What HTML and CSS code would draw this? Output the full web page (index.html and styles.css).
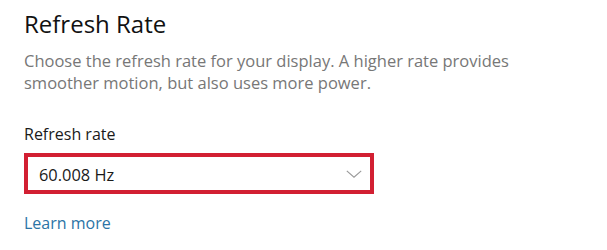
FILE: index.html
```html
<!DOCTYPE html>
<html>
<head>
<meta charset="utf-8">
<link rel="stylesheet" href="styles.css">
</head>
<body>
<div class="page">
  <h1 class="title">Refresh Rate</h1>
  <p class="desc">Choose the refresh rate for your display. A higher rate provides smoother motion, but also uses more power.</p>
  <div class="label">Refresh rate</div>
  <div class="select">
    <span class="value">60.008 Hz</span>
    <svg class="chev" width="16" height="8" viewBox="0 0 16 8"><path d="M0.8 0.8 L8 7.2 L15.2 0.8" fill="none" stroke="#999" stroke-width="1.1"/></svg>
  </div>
  <a class="link" href="#">Learn more</a>
</div>
</body>
</html>
```
FILE: styles.css
```css
html, body { margin: 0; padding: 0; background: #fff; }
.page {
  padding: 8px 0 0 24px;
  font-family: "Open Sans", "Noto Sans", sans-serif;
  display: flex;
  flex-direction: column;
  align-items: flex-start;
}
.title {
  margin: 0;
  font-weight: 400;
  font-size: 24px;
  line-height: 32px;
  color: #111;
}
.desc {
  margin: 10px 0 0 0;
  width: 540px;
  font-size: 16.5px;
  line-height: 22px;
  color: #777;
}
.label {
  margin-top: 30px;
  font-size: 16px;
  line-height: 20px;
  color: #1a1a1a;
}
.select {
  margin-top: 9px;
  box-sizing: border-box;
  width: 350px;
  height: 41px;
  border: 4px solid #d21f32;
  display: flex;
  align-items: center;
  justify-content: space-between;
  padding: 2px 8px 0 11px;
}
.value {
  font-size: 16.4px;
  line-height: 20px;
  color: #1a1a1a;
}
.chev { display: block; margin-top: -1px; }
.link {
  margin-top: 19px;
  font-size: 16px;
  line-height: 20px;
  color: #2c74a6;
  text-decoration: none;
}
```
